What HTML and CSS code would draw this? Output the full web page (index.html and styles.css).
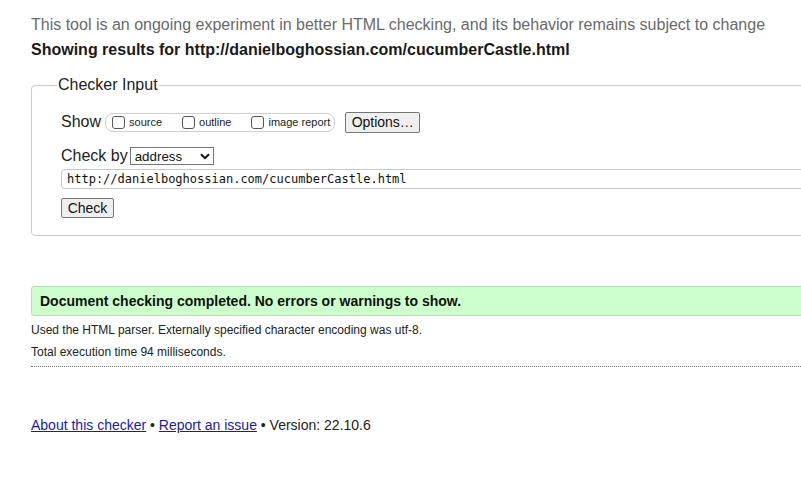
FILE: index.html
```html
<!DOCTYPE html>
<html>
<head>
<meta charset="utf-8">
<title>Nu Html Checker</title>
<link rel="stylesheet" href="styles.css">
</head>
<body>
<div class="page">
  <p class="intro">This tool is an ongoing experiment in better HTML checking, and its behavior remains subject to change</p>
  <p class="showing">Showing results for http://danielboghossian.com/cucumberCastle.html</p>

  <fieldset class="checker">
    <legend>Checker Input</legend>
    <div class="row row-show">
      <span class="lbl">Show</span>
      <span class="group">
        <label class="opt"><span class="cb"></span>source</label>
        <label class="opt"><span class="cb"></span>outline</label>
        <label class="opt"><span class="cb"></span>image report</label>
      </span>
      <button class="btn btn-options" type="button">Options…</button>
    </div>
    <div class="row row-by">
      <span class="lbl">Check by</span>
      <span class="select-wrap">
        <select class="select"><option>address</option></select>
        <svg class="chev" width="10" height="7" viewBox="0 0 10 7"><path d="M1 1.2 L5 5.2 L9 1.2" fill="none" stroke="#111" stroke-width="2"/></svg>
      </span>
    </div>
    <input class="url" type="text" value="http://danielboghossian.com/cucumberCastle.html">
    <button class="btn btn-check" type="button">Check</button>
  </fieldset>

  <div class="success">Document checking completed. No errors or warnings to show.</div>
  <p class="details">Used the HTML parser. Externally specified character encoding was utf-8.</p>
  <p class="details">Total execution time 94 milliseconds.</p>
  <hr class="dots">

  <p class="footer"><a href="#">About this checker</a> • <a href="#">Report an issue</a> • Version: 22.10.6</p>
</div>
</body>
</html>
```
FILE: styles.css
```css
html { overflow: hidden; }
body {
  margin: 0;
  font-family: "Liberation Sans", Arial, sans-serif;
  color: #222;
  background: #fff;
}
.page {
  width: 1100px;
  padding: 15px 0 0 31px;
}
.intro {
  margin: 0;
  font-size: 16px;
  line-height: 20px;
  color: #6a6a6a;
}
.showing {
  margin: 5px 0 0;
  font-size: 16px;
  line-height: 20px;
  font-weight: bold;
  color: #1a1a1a;
}
.checker {
  margin: 16px 0 0;
  padding: 17px 0 17px 29px;
  border: 1px solid #cbcbcb;
  border-radius: 4px;
  min-width: 0;
}
.checker legend {
  font-size: 16px;
  line-height: 18px;
  padding: 0 1px;
  margin-left: -4px;
  color: #222;
}
.row {
  display: flex;
  align-items: center;
}
.row-show { height: 22px; }
.lbl {
  font-size: 16px;
  line-height: 18px;
  color: #222;
}
.group {
  display: inline-flex;
  align-items: center;
  height: 17px;
  margin-left: 4px;
  padding: 0 4px 0 6px;
  border: 1px solid #cfcfcf;
  border-radius: 8px;
}
.opt {
  display: inline-flex;
  align-items: center;
  font-size: 11px;
  color: #222;
  margin-right: 20px;
}
.opt:last-child { margin-right: 0; }
.cb {
  width: 11px;
  height: 11px;
  border: 1px solid #555;
  border-radius: 3px;
  margin-right: 4px;
  background: #fff;
}
.btn {
  font-family: "Liberation Sans", Arial, sans-serif;
  font-size: 14px;
  color: #111;
  background: #efefef;
  border: 1px solid #767676;
  border-radius: 2px;
  padding: 0;
}
.btn-options {
  margin-left: 10px;
  width: 75px;
  height: 21px;
}
.row-by {
  margin-top: 14px;
  height: 18px;
}
.select-wrap {
  position: relative;
  margin-left: 2px;
  display: inline-block;
  height: 18px;
}
.select {
  appearance: none;
  -webkit-appearance: none;
  width: 84px;
  height: 18px;
  border: 1px solid #767676;
  border-radius: 0;
  background: #fff;
  font-family: "Liberation Sans", Arial, sans-serif;
  font-size: 13.33px;
  color: #111;
  padding: 0 0 0 4px;
  margin: 0;
  display: block;
}
.chev {
  position: absolute;
  right: 4px;
  top: 6px;
  pointer-events: none;
}
.url {
  display: block;
  box-sizing: border-box;
  margin: 4px 0 0;
  width: 1040px;
  height: 20px;
  border: 1px solid #c8c8c8;
  border-radius: 4px;
  padding: 0 0 0 5px;
  font-family: "DejaVu Sans Mono", "Liberation Mono", monospace;
  font-size: 12px;
  color: #111;
  outline: none;
}
.btn-check {
  display: block;
  margin-top: 9px;
  width: 53px;
  height: 20px;
}
.success {
  margin-top: 50px;
  box-sizing: border-box;
  height: 30px;
  line-height: 28px;
  padding-left: 8px;
  background: #ccffcc;
  border: 1px solid #b5e0b5;
  border-radius: 3px;
  font-size: 14px;
  font-weight: bold;
  color: #111;
}
.details {
  margin: 0;
  font-size: 12px;
  line-height: 22px;
  color: #222;
}
.success + .details { margin-top: 3px; }
.dots {
  margin: 3px 0 0;
  border: 0;
  border-top: 1px dotted #777;
  height: 0;
}
.footer {
  margin: 49px 0 0;
  font-size: 14px;
  line-height: 18px;
  color: #222;
}
.footer a {
  color: #1a1aa6;
  text-decoration: underline;
}
```
